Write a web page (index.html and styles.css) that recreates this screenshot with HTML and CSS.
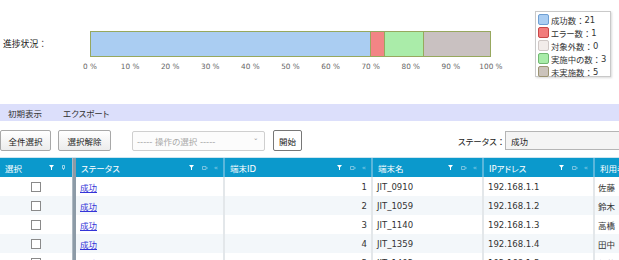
FILE: index.html
```html
<!DOCTYPE html>
<html lang="ja">
<head>
<meta charset="utf-8">
<link rel="stylesheet" href="styles.css">
</head>
<body>
<div class="page">
  <div class="top">
    <div class="plabel">進捗状況<span class="col">：</span></div>
    <div class="chart">
      <div class="bar">
        <div class="seg seg-ok" style="width:70%"></div>
        <div class="seg seg-err" style="width:3.333%"></div>
        <div class="seg seg-run" style="width:10%"></div>
        <div class="seg seg-todo" style="width:16.667%"></div>
      </div>
      <div class="axis">
        <div class="tick"><span>0 %</span></div>
        <div class="tick"><span>10 %</span></div>
        <div class="tick"><span>20 %</span></div>
        <div class="tick"><span>30 %</span></div>
        <div class="tick"><span>40 %</span></div>
        <div class="tick"><span>50 %</span></div>
        <div class="tick"><span>60 %</span></div>
        <div class="tick"><span>70 %</span></div>
        <div class="tick"><span>80 %</span></div>
        <div class="tick"><span>90 %</span></div>
        <div class="tick"><span>100 %</span></div>
      </div>
    </div>
    <div class="legend">
      <div class="li"><span class="sw sw-ok"></span>成功数<span class="col">：</span>21</div>
      <div class="li"><span class="sw sw-err"></span>エラー数<span class="col">：</span>1</div>
      <div class="li"><span class="sw sw-none"></span>対象外数<span class="col">：</span>0</div>
      <div class="li"><span class="sw sw-run"></span>実施中の数<span class="col">：</span>3</div>
      <div class="li"><span class="sw sw-todo"></span>未実施数<span class="col">：</span>5</div>
    </div>
  </div>

  <div class="menu">
    <span class="mi">初期表示</span>
    <span class="mi">エクスポート</span>
  </div>

  <div class="toolbar">
    <button class="btn b1">全件選択</button>
    <button class="btn b2">選択解除</button>
    <div class="opsel"><span>----- 操作の選択 -----</span><span class="chev">&#711;</span></div>
    <button class="btn b3">開始</button>
    <div class="status">
      <span class="slabel">ステータス<span class="col">：</span></span>
      <div class="ssel">成功</div>
    </div>
  </div>

  <div class="grid">
    <div class="row head">
      <div class="c c1">選択<span class="icons"><svg class="fun" width="5" height="5" viewBox="0 0 5 5"><path d="M0 0H5L3 2.4V5H2V2.4Z" fill="#fff"/></svg><svg class="pinv" width="3" height="5" viewBox="0 0 3 5"><path d="M0.5 0.5H2.5V3.5H0.5Z M1.5 3.5V5" stroke="#bfe2f0" stroke-width="0.8" fill="none"/></svg></span></div>
      <div class="div"></div>
      <div class="c c2">ステータス<span class="icons"><svg class="fun" width="5" height="5" viewBox="0 0 5 5"><path d="M0 0H5L3 2.4V5H2V2.4Z" fill="#fff"/></svg><svg class="pin" width="6" height="4" viewBox="0 0 6 4"><path d="M0.5 0.5H4V3.5H0.5Z M4 2H6" stroke="#8fcde6" stroke-width="0.8" fill="none"/></svg><span class="dbl">«</span></span></div>
      <div class="c c3">端末ID<span class="icons"><svg class="fun" width="5" height="5" viewBox="0 0 5 5"><path d="M0 0H5L3 2.4V5H2V2.4Z" fill="#fff"/></svg><svg class="pin" width="6" height="4" viewBox="0 0 6 4"><path d="M0.5 0.5H4V3.5H0.5Z M4 2H6" stroke="#8fcde6" stroke-width="0.8" fill="none"/></svg><span class="dbl">«</span></span></div>
      <div class="c c4">端末名<span class="icons"><svg class="fun" width="5" height="5" viewBox="0 0 5 5"><path d="M0 0H5L3 2.4V5H2V2.4Z" fill="#fff"/></svg><svg class="pin" width="6" height="4" viewBox="0 0 6 4"><path d="M0.5 0.5H4V3.5H0.5Z M4 2H6" stroke="#8fcde6" stroke-width="0.8" fill="none"/></svg><span class="dbl">«</span></span></div>
      <div class="c c5">IPアドレス<span class="icons"><svg class="fun" width="5" height="5" viewBox="0 0 5 5"><path d="M0 0H5L3 2.4V5H2V2.4Z" fill="#fff"/></svg><svg class="pin" width="6" height="4" viewBox="0 0 6 4"><path d="M0.5 0.5H4V3.5H0.5Z M4 2H6" stroke="#8fcde6" stroke-width="0.8" fill="none"/></svg><span class="dbl">«</span></span></div>
      <div class="c c6">利用者</div>
    </div>
    <div class="row">
      <div class="c c1"><span class="cb"></span></div><div class="div"></div>
      <div class="c c2"><a class="lnk">成功</a></div>
      <div class="c c3 num">1</div>
      <div class="c c4">JIT_0910</div>
      <div class="c c5">192.168.1.1</div>
      <div class="c c6">佐藤</div>
    </div>
    <div class="row alt">
      <div class="c c1"><span class="cb"></span></div><div class="div"></div>
      <div class="c c2"><a class="lnk">成功</a></div>
      <div class="c c3 num">2</div>
      <div class="c c4">JIT_1059</div>
      <div class="c c5">192.168.1.2</div>
      <div class="c c6">鈴木</div>
    </div>
    <div class="row">
      <div class="c c1"><span class="cb"></span></div><div class="div"></div>
      <div class="c c2"><a class="lnk">成功</a></div>
      <div class="c c3 num">3</div>
      <div class="c c4">JIT_1140</div>
      <div class="c c5">192.168.1.3</div>
      <div class="c c6">高橋</div>
    </div>
    <div class="row alt">
      <div class="c c1"><span class="cb"></span></div><div class="div"></div>
      <div class="c c2"><a class="lnk">成功</a></div>
      <div class="c c3 num">4</div>
      <div class="c c4">JIT_1359</div>
      <div class="c c5">192.168.1.4</div>
      <div class="c c6">田中</div>
    </div>
    <div class="row">
      <div class="c c1"><span class="cb"></span></div><div class="div"></div>
      <div class="c c2"><a class="lnk">成功</a></div>
      <div class="c c3 num">5</div>
      <div class="c c4">JIT_1402</div>
      <div class="c c5">192.168.1.5</div>
      <div class="c c6">伊藤</div>
    </div>
  </div>
</div>
</body>
</html>
```

FILE: styles.css
```css
html, body {
  margin: 0;
  padding: 0;
  background: #fff;
  overflow: hidden;
}
body {
  width: 619px;
  height: 260px;
  font-family: "DejaVu Sans", "Noto Sans CJK JP", sans-serif;
  font-size: 8.5px;
  color: #333;
  font-feature-settings: "palt";
}
.page {
  width: 760px;
}
.col {
  font-feature-settings: normal;
}

/* progress */
.top {
  display: flex;
  height: 104px;
}
.plabel {
  width: 90px;
  box-sizing: border-box;
  padding-left: 3px;
  padding-top: 38px;
  line-height: 12px;
  color: #222;
  font-size: 8.8px;
}
.chart {
  width: 401px;
  padding-top: 31px;
}
.bar {
  display: flex;
  height: 26px;
  box-sizing: border-box;
  border: 1px solid #97a85e;
}
.seg {
  height: 100%;
  box-sizing: border-box;
}
.seg + .seg {
  border-left: 1px solid #97a85e;
}
.seg-ok { background: #aacdf2; }
.seg-err { background: #f28585; }
.seg-run { background: #aaeca9; }
.seg-todo { background: #c9c1c1; }
.axis {
  display: flex;
  justify-content: space-between;
  margin-top: 5px;
  height: 10px;
}
.tick {
  width: 0;
  display: flex;
  justify-content: center;
  white-space: nowrap;
  font-size: 7.3px;
  line-height: 10px;
  color: #666;
}
.legend {
  margin-left: 44px;
  margin-top: 11px;
  align-self: flex-start;
  width: 76px;
  height: 66px;
  box-sizing: border-box;
  border: 1px solid #c9c9c9;
  box-shadow: 1px 1px 2px rgba(0,0,0,0.15);
  padding-top: 1px;
  padding-left: 2px;
  background: #fff;
}
.li {
  display: flex;
  align-items: center;
  height: 13px;
  white-space: nowrap;
  color: #333;
  font-size: 8.4px;
}
.sw {
  width: 11px;
  height: 11px;
  box-sizing: border-box;
  border-radius: 2px;
  margin-right: 2px;
  border: 1px solid;
  flex: none;
}
.sw-ok { background: #aacdf2; border-color: #6f9fd3; }
.sw-err { background: #f27c7c; border-color: #c84848; }
.sw-none { background: #f2ecea; border-color: #cfc7c5; }
.sw-run { background: #a8eca8; border-color: #72b872; }
.sw-todo { background: #cbc3bb; border-color: #9c9472; }

/* menu */
.menu {
  display: flex;
  height: 17px;
  align-items: center;
  background: #dcdffb;
  padding-left: 8px;
  gap: 21px;
  color: #333;
}

/* toolbar */
.toolbar {
  display: flex;
  align-items: center;
  padding-top: 9px;
  padding-bottom: 6px;
  height: 21px;
}
.btn {
  font: inherit;
  font-feature-settings: "palt";
  height: 21px;
  box-sizing: border-box;
  border: 1px solid #a8a8a8;
  border-radius: 2px;
  background: linear-gradient(#ffffff, #ececec);
  color: #222;
  padding: 0;
  margin: 0;
}
.b1 { width: 51px; margin-left: 0; }
.b2 { width: 53px; margin-left: 7px; }
.opsel {
  margin-left: 21px;
  width: 133px;
  height: 20px;
  box-sizing: border-box;
  border: 1px solid #cfcfcf;
  border-radius: 2px;
  display: flex;
  align-items: center;
  justify-content: space-between;
  padding: 0 6px 0 4px;
  color: #a8a8a8;
  background: #fcfcfc;
}
.chev {
  font-size: 9px;
  color: #999;
  line-height: 8px;
  padding-top: 4px;
}
.b3 {
  width: 29px;
  margin-left: 8px;
  border-color: #777;
  background: #fff;
}
.status {
  margin-left: 156px;
  display: flex;
  align-items: center;
}
.slabel {
  width: 47px;
  color: #222;
  white-space: nowrap;
}
.ssel {
  width: 160px;
  height: 19px;
  box-sizing: border-box;
  border: 1px solid #b5b5b5;
  background: #f4f4f4;
  display: flex;
  align-items: center;
  padding-left: 5px;
  color: #222;
}

/* grid */
.grid {
  border-top: 1px solid #cde6f1;
}
.row {
  display: flex;
  height: 19px;
  background: #fff;
}
.row.alt {
  background: #f3f7fa;
}
.row.head {
  background: #0b99cc;
  color: #fff;
}
.c {
  box-sizing: border-box;
  height: 100%;
  display: flex;
  align-items: center;
  white-space: nowrap;
  overflow: hidden;
  padding-left: 4px;
  border-right: 2px solid #e3e7ea;
}
.head .c {
  border-right-color: #5ab6db;
  padding-left: 5px;
}
.c1 {
  width: 72px;
  border-right: none;
  justify-content: center;
  padding-left: 0;
}
.head .c1 {
  justify-content: flex-start;
  padding-left: 5px;
}
.div {
  width: 4px;
  height: 100%;
  background: #8d9ba7;
  border-left: 1px solid #aeb9c2;
  box-sizing: border-box;
}
.c2 { width: 149px; }
.c3 { width: 148px; }
.c4 { width: 111px; }
.c5 { width: 111px; }
.c6 { width: 120px; border-right: none; padding-left: 3px; }
.num {
  justify-content: flex-end;
  padding-right: 4px;
}
.icons {
  margin-left: auto;
  display: flex;
  align-items: center;
  padding-right: 5px;
}
.c1 .icons { padding-right: 7px; }
.fun { margin-right: 8px; }
.pin { margin-right: 6px; }
.pinv { margin-right: 0; }
.dbl {
  font-size: 7px;
  color: #8fcde6;
  line-height: 8px;
}
.cb {
  width: 10px;
  height: 10px;
  box-sizing: border-box;
  border: 1px solid #8a8a8a;
  background: #fff;
}
.lnk {
  color: #3434d8;
  text-decoration: underline;
}
```
